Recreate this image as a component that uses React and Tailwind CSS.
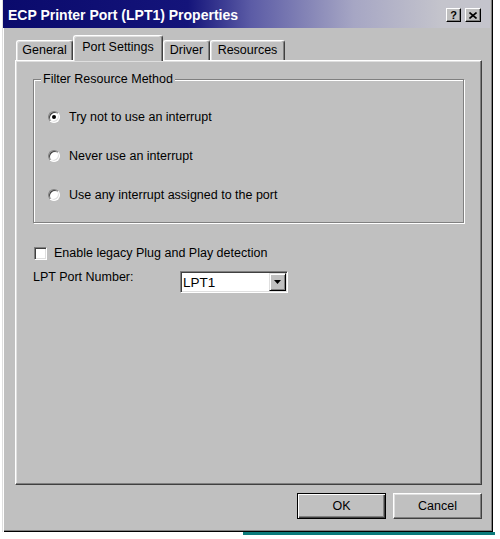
import React from 'react';

const tabs = [
    { label: 'General', w: 'w-[57px]' },
    { label: 'Port Settings', w: 'w-[90px]', active: true },
    { label: 'Driver', w: 'w-[47px]' },
    { label: 'Resources', w: 'w-[75px]' },
];

const radios = [
    { label: 'Try not to use an interrupt', checked: true },
    { label: 'Never use an interrupt' },
    { label: 'Use any interrupt assigned to the port' },
];

function Radio({ checked }) {
    return (
        <div className="flex h-[12px] w-[12px] items-center justify-center rounded-full border border-t-[#808080] border-l-[#808080] border-b-white border-r-white bg-white shadow-[inset_1px_1px_0_#404040,inset_-1px_-1px_0_#dfdfdf]">
            {checked && <div className="h-[4px] w-[4px] rounded-full bg-black" />}
        </div>
    );
}

function Tab({ label, w, active }) {
    if (active) {
        return (
            <div className={`relative z-10 -mb-px flex h-[26px] ${w} items-center justify-center rounded-t-[3px] border-t border-l border-white border-r border-r-[#404040] bg-[#c0c0c0] pb-[3px] shadow-[inset_-1px_0_0_#808080,inset_1px_1px_0_#dfdfdf]`}>
                {label}
            </div>
        );
    }
    return (
        <div className={`flex h-[20px] ${w} items-center justify-center rounded-t-[3px] border-t border-l border-white border-r border-r-[#404040] shadow-[inset_-1px_0_0_#808080,inset_1px_1px_0_#dfdfdf]`}>
            {label}
        </div>
    );
}

export default function App() {
    return (
        <div className="h-[539px] w-[500px] overflow-hidden bg-white font-['Liberation_Sans',Arial,sans-serif] text-[12.5px] text-black">
            {/* Window */}
            <div className="ml-[2px] flex h-[532px] w-[491px] flex-col bg-[#c0c0c0] shadow-[inset_1px_0_0_#dfdfdf,inset_2px_0_0_#fff,inset_-1px_-1px_0_#000,inset_-2px_-2px_0_#808080]">
                {/* Title bar */}
                <div className="ml-[1px] mr-[3px] flex h-[28px] items-center bg-[linear-gradient(to_right,#0a0a6c_0%,#14147a_38%,#5c5ca6_51%,#a6a6c4_72%,#c4c4cc_90%)] pl-[5px] pr-[9px] pt-[2px]">
                    <span className="text-[14px] font-bold text-white">ECP Printer Port (LPT1) Properties</span>
                    <div className="ml-auto flex gap-[4px]">
                        <div className="flex h-[14px] w-[15px] items-center justify-center border-t border-l border-white border-b border-r border-b-black border-r-black bg-[#c0c0c0] text-[11px] leading-none font-bold shadow-[inset_-1px_-1px_0_#808080]">
                            ?
                        </div>
                        <div className="flex h-[14px] w-[16px] items-center justify-center border-t border-l border-white border-b border-r border-b-black border-r-black bg-[#c0c0c0] shadow-[inset_-1px_-1px_0_#808080]">
                            <svg width="8" height="7" viewBox="0 0 8 7">
                                <path d="M0.5 0.5 L7.5 6.5 M7.5 0.5 L0.5 6.5" stroke="#000" strokeWidth="1.6" />
                            </svg>
                        </div>
                    </div>
                </div>

                {/* Tabs */}
                <div className="ml-[14px] mt-[7px] flex h-[25px] items-end">
                    {tabs.map((t) => (
                        <Tab key={t.label} {...t} />
                    ))}
                </div>

                {/* Tab panel */}
                <div className="ml-[13px] mr-[11px] h-[425px] border-t border-l border-white border-r border-b border-r-[#404040] border-b-[#404040] px-[17px] shadow-[inset_-1px_-1px_0_#808080,inset_1px_1px_0_#dfdfdf]">
                    {/* Filter group */}
                    <div className="relative mt-[18px] border border-[#808080] pb-[17px] pl-[14px] pt-[27px] shadow-[inset_1px_1px_0_#fff,1px_1px_0_#fff]">
                        <span className="absolute -top-[8px] left-[7px] bg-[#c0c0c0] px-[2px] leading-[15px]">Filter Resource Method</span>
                        <div className="flex flex-col gap-[19px]">
                            {radios.map((r) => (
                                <div key={r.label} className="flex h-[20px] items-center gap-[9px]">
                                    <Radio checked={r.checked} />
                                    <span>{r.label}</span>
                                </div>
                            ))}
                        </div>
                    </div>

                    {/* Legacy checkbox */}
                    <div className="ml-[1px] mt-[24px] flex h-[13px] items-center gap-[7px]">
                        <div className="h-[13px] w-[13px] border border-t-[#808080] border-l-[#808080] border-b-white border-r-white bg-white shadow-[inset_1px_1px_0_#404040,inset_-1px_-1px_0_#dfdfdf]" />
                        <span>Enable legacy Plug and Play detection</span>
                    </div>

                    {/* Port number */}
                    <div className="mt-[11px] flex items-start">
                        <span className="-mt-[1px] w-[147px] leading-[15px]">LPT Port Number:</span>
                        <div className="flex h-[22px] w-[108px] items-center border border-t-[#808080] border-l-[#808080] border-b-white border-r-white bg-white p-px shadow-[inset_1px_1px_0_#404040,inset_-1px_-1px_0_#dfdfdf]">
                            <span className="flex-1 pl-[1px] pt-[2px] text-[13.5px]">LPT1</span>
                            <div className="flex h-full w-[17px] items-center justify-center border-t border-l border-t-[#dfdfdf] border-l-[#dfdfdf] border-b border-r border-b-black border-r-black bg-[#c0c0c0] shadow-[inset_1px_1px_0_#fff,inset_-1px_-1px_0_#808080]">
                                <svg width="7" height="4" viewBox="0 0 7 4">
                                    <path d="M0 0 H7 L3.5 4 Z" fill="#000" />
                                </svg>
                            </div>
                        </div>
                    </div>
                </div>

                {/* Dialog buttons */}
                <div className="mr-[11px] mt-[8px] flex justify-end gap-[7px]">
                    <div className="flex h-[26px] w-[89px] items-center justify-center border border-black shadow-[inset_1px_1px_0_#fff,inset_-1px_-1px_0_#404040,inset_-2px_-2px_0_#808080]">
                        OK
                    </div>
                    <div className="flex h-[26px] w-[89px] items-center justify-center border-t border-l border-white border-b border-r border-b-[#404040] border-r-[#404040] shadow-[inset_-1px_-1px_0_#808080,inset_1px_1px_0_#dfdfdf]">
                        Cancel
                    </div>
                </div>
            </div>

            {/* Desktop strip below */}
            <div className="flex">
                <div className="w-[243px]" />
                <div className="h-[3px] w-[252px] bg-[#0a7a7a]" />
            </div>
        </div>
    );
}
